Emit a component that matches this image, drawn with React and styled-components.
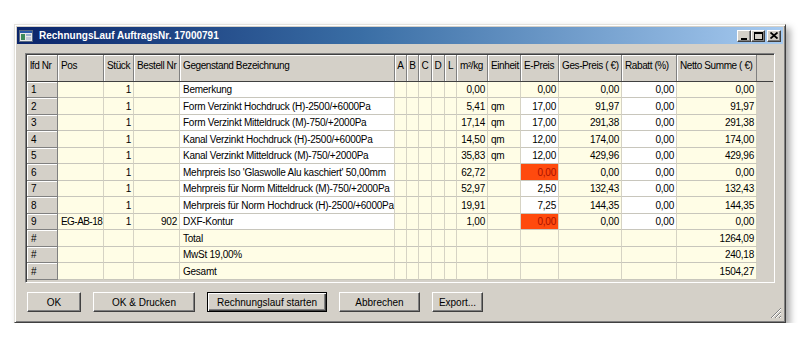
import React from "react";
import styled, { createGlobalStyle } from "styled-components";

const GlobalStyle = createGlobalStyle`
  html, body { margin: 0; padding: 0; background: #ffffff; }
  body { font-family: "Liberation Sans", Arial, sans-serif; }
`;

const COLS = "31px 46px 30px 46px 215px 12px 12px 13px 13px 12px 31px 33px 38px 63px 55px 80px";

const Window = styled.div`
  position: relative;
  box-sizing: border-box;
  margin: 24px 0 0 14px;
  width: 772px;
  height: 299px;
  background: #d4d0c8;
  border: 1px solid;
  border-color: #e4e2dc #404040 #404040 #e4e2dc;
  box-shadow: inset 1px 1px 0 #ffffff, inset -1px -1px 0 #808080,
    4px 4px 7px rgba(0, 0, 0, 0.35);
  padding: 2px;
`;

const TitleBar = styled.div`
  height: 17px;
  display: flex;
  align-items: center;
  background: linear-gradient(90deg, #0a246a 0%, #3a6ea5 45%, #a6caf0 100%);
  padding: 0 2px;
`;

const TitleText = styled.span`
  margin-left: 6px;
  color: #ffffff;
  font-weight: bold;
  font-size: 10px;
  white-space: nowrap;
`;

const TitleButtons = styled.div`
  margin-left: auto;
  display: flex;
  align-items: center;
`;

const CapButton = styled.div`
  box-sizing: border-box;
  width: 14px;
  height: 12px;
  margin-left: ${(p) => p.$gap || 0}px;
  background: #d4d0c8;
  border: 1px solid;
  border-color: #ffffff #404040 #404040 #ffffff;
  box-shadow: inset -1px -1px 0 #808080;
  display: flex;
  align-items: center;
  justify-content: center;
`;

const Body = styled.div`
  padding: 9px 8px 0 8px;
`;

const GridPanel = styled.div`
  box-sizing: border-box;
  width: 750px;
  height: 230px;
  background: #d4d0c8;
  border: 1px solid;
  border-color: #808080 #ffffff #ffffff #808080;
  box-shadow: inset 1px 1px 0 #404040, inset -1px -1px 0 #d4d0c8;
  padding: 1px;
  overflow: hidden;
`;

const Row = styled.div`
  display: grid;
  grid-template-columns: ${COLS};
  height: ${(p) => p.$h}px;
`;

const HeadRow = styled(Row)`
  border-bottom: 1px solid #404040;
  box-sizing: content-box;
`;

const HeadCell = styled.div`
  box-sizing: border-box;
  background: #d4d0c8;
  border-right: 1px solid #808080;
  box-shadow: inset 1px 1px 0 #ffffff;
  font-size: 10px;
  letter-spacing: -0.4px;
  color: #000;
  padding: 5px 0 0 ${(p) => (p.$center ? 0 : 3)}px;
  text-align: ${(p) => (p.$center ? "center" : "left")};
  white-space: nowrap;
  overflow: hidden;
`;

const BG = {
  y: "#fffde6",
  w: "#ffffff",
  r: "#ff4a0e",
};

const Cell = styled.div`
  box-sizing: border-box;
  background: ${(p) => BG[p.$bg]};
  border-right: 1px solid #d6d3c4;
  border-bottom: 1px solid #c8c6bc;
  font-size: 10px;
  letter-spacing: ${(p) => (p.$tight ? "-0.55px" : "-0.25px")};
  color: ${(p) => (p.$bg === "r" ? "#a81000" : "#000")};
  display: flex;
  align-items: center;
  justify-content: ${(p) => (p.$right ? "flex-end" : "flex-start")};
  padding: 0 2px 0 3px;
  white-space: nowrap;
  overflow: hidden;
`;

const NrCell = styled.div`
  box-sizing: border-box;
  background: #d4d0c8;
  border-right: 1px solid #808080;
  border-bottom: 1px solid #808080;
  box-shadow: inset 1px 1px 0 #ffffff;
  font-size: 10px;
  color: #000;
  display: flex;
  align-items: center;
  padding-left: 4px;
`;

const ButtonRow = styled.div`
  display: flex;
  gap: 12px;
  padding: 9px 0 0 2px;
`;

const Button = styled.button`
  box-sizing: border-box;
  width: ${(p) => p.$w}px;
  height: 20px;
  padding: 0;
  background: #d4d0c8;
  font-family: "Liberation Sans", Arial, sans-serif;
  font-size: 10px;
  color: #000;
  border: 1px solid;
  border-color: ${(p) =>
    p.$default ? "#000 #000 #000 #000" : "#ffffff #404040 #404040 #ffffff"};
  box-shadow: ${(p) =>
    p.$default
      ? "inset 1px 1px 0 #ffffff, inset -1px -1px 0 #404040, inset -2px -2px 0 #808080"
      : "inset -1px -1px 0 #808080"};
`;

const Grip = styled.svg`
  position: absolute;
  right: 3px;
  bottom: 3px;
`;

const headers = [
  ["lfd Nr"], ["Pos"], ["Stück"], ["Bestell Nr"], ["Gegenstand Bezeichnung"],
  ["A", 1], ["B", 1], ["C", 1], ["D", 1], ["L", 1],
  ["m²/kg"], ["Einheit"], ["E-Preis"], ["Ges-Preis ( €)"], ["Rabatt (%)"], ["Netto Summe ( €)"],
];

// each row: nr, pos, stueck, bestell, text, m2, einheit, epreis, epreisBg, ges, rabatt, netto, textBg, rabattBg
const rows = [
  ["1", "", "1", "", "Bemerkung", "0,00", "", "0,00", "y", "0,00", "0,00", "0,00", "w", "w"],
  ["2", "", "1", "", "Form Verzinkt Hochdruck (H)-2500/+6000Pa", "5,41", "qm", "17,00", "w", "91,97", "0,00", "91,97", "w", "w"],
  ["3", "", "1", "", "Form Verzinkt Mitteldruck (M)-750/+2000Pa", "17,14", "qm", "17,00", "w", "291,38", "0,00", "291,38", "w", "w"],
  ["4", "", "1", "", "Kanal Verzinkt Hochdruck (H)-2500/+6000Pa", "14,50", "qm", "12,00", "w", "174,00", "0,00", "174,00", "w", "w"],
  ["5", "", "1", "", "Kanal Verzinkt Mitteldruck (M)-750/+2000Pa", "35,83", "qm", "12,00", "w", "429,96", "0,00", "429,96", "w", "w"],
  ["6", "", "1", "", "Mehrpreis Iso 'Glaswolle Alu kaschiert' 50,00mm", "62,72", "", "0,00", "r", "0,00", "0,00", "0,00", "w", "w"],
  ["7", "", "1", "", "Mehrpreis für Norm Mitteldruck (M)-750/+2000Pa", "52,97", "", "2,50", "w", "132,43", "0,00", "132,43", "w", "w"],
  ["8", "", "1", "", "Mehrpreis für Norm Hochdruck (H)-2500/+6000Pa", "19,91", "", "7,25", "w", "144,35", "0,00", "144,35", "w", "w"],
  ["9", "EG-AB-18", "1", "902", "DXF-Kontur", "1,00", "", "0,00", "r", "0,00", "0,00", "0,00", "w", "w"],
  ["#", "", "", "", "Total", "", "", "", "y", "", "", "1264,09", "y", "y"],
  ["#", "", "", "", "MwSt 19,00%", "", "", "", "y", "", "", "240,18", "y", "y"],
  ["#", "", "", "", "Gesamt", "", "", "", "y", "", "", "1504,27", "y", "y"],
];

function AppIcon() {
  return (
    <svg width="14" height="12" viewBox="0 0 14 12">
      <rect x="0.5" y="0.5" width="13" height="11" fill="#e8e8e8" stroke="#5a6a80" />
      <rect x="1" y="1" width="12" height="2" fill="#2a5aa8" />
      <rect x="2" y="4" width="4" height="6" fill="#3c8a5a" />
      <rect x="7" y="4" width="5" height="2" fill="#9ab0d0" />
      <rect x="7" y="7" width="5" height="3" fill="#c0c8d8" />
    </svg>
  );
}

export default function App() {
  return (
    <>
      <GlobalStyle />
      <Window>
        <TitleBar>
          <AppIcon />
          <TitleText>RechnungsLauf AuftragsNr. 17000791</TitleText>
          <TitleButtons>
            <CapButton>
              <svg width="8" height="8" viewBox="0 0 8 8">
                <rect x="1" y="6" width="6" height="2" fill="#000" />
              </svg>
            </CapButton>
            <CapButton>
              <svg width="9" height="8" viewBox="0 0 9 8">
                <rect x="0.5" y="0.5" width="8" height="7" fill="none" stroke="#000" />
                <rect x="0" y="0" width="9" height="2" fill="#000" />
              </svg>
            </CapButton>
            <CapButton $gap={2}>
              <svg width="8" height="7" viewBox="0 0 8 7">
                <path d="M0.5 0.5 L7.5 6.5 M7.5 0.5 L0.5 6.5" stroke="#000" strokeWidth="1.8" />
              </svg>
            </CapButton>
          </TitleButtons>
        </TitleBar>
        <Body>
          <GridPanel>
            <HeadRow $h={26}>
              {headers.map(([t, c]) => (
                <HeadCell key={t} $center={c}>{t}</HeadCell>
              ))}
            </HeadRow>
            {rows.map((r, i) => {
              const [nr, pos, st, be, tx, m2, ein, ep, epBg, ges, rab, net, txBg, rabBg] = r;
              return (
                <Row key={i} $h={i % 2 ? 17 : 16}>
                  <NrCell>{nr}</NrCell>
                  <Cell $bg="y" $tight>{pos}</Cell>
                  <Cell $bg="y" $right>{st}</Cell>
                  <Cell $bg="y" $right>{be}</Cell>
                  <Cell $bg={txBg}>{tx}</Cell>
                  <Cell $bg="y" />
                  <Cell $bg="y" />
                  <Cell $bg="y" />
                  <Cell $bg="y" />
                  <Cell $bg="y" />
                  <Cell $bg="y" $right>{m2}</Cell>
                  <Cell $bg="y">{ein}</Cell>
                  <Cell $bg={epBg} $right>{ep}</Cell>
                  <Cell $bg="y" $right>{ges}</Cell>
                  <Cell $bg={rabBg} $right>{rab}</Cell>
                  <Cell $bg="y" $right>{net}</Cell>
                </Row>
              );
            })}
          </GridPanel>
          <ButtonRow>
            <Button $w={54}>OK</Button>
            <Button $w={102}>OK &amp; Drucken</Button>
            <Button $w={120} $default>Rechnungslauf starten</Button>
            <Button $w={81}>Abbrechen</Button>
            <Button $w={51}>Export...</Button>
          </ButtonRow>
        </Body>
        <Grip width="12" height="12" viewBox="0 0 12 12">
          <path d="M11 1 L1 11 M11 5 L5 11 M11 9 L9 11" stroke="#808080" strokeWidth="1" />
          <path d="M11 2 L2 11 M11 6 L6 11 M11 10 L10 11" stroke="#ffffff" strokeWidth="1" />
        </Grip>
      </Window>
    </>
  );
}
